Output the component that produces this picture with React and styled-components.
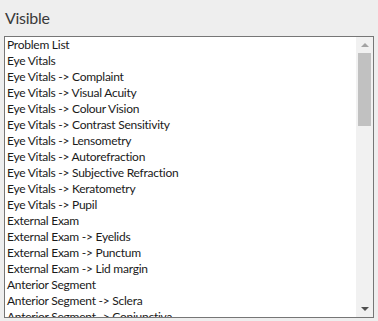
import styled, { createGlobalStyle } from 'styled-components';

const GlobalStyle = createGlobalStyle`
   html, body {
      margin: 0;
      padding: 0;
      background: #eeeeee;
   }
   body {
      font-family: 'Lato', 'Liberation Sans', sans-serif;
   }
`;

const Panel = styled.div`
   display: flex;
   flex-direction: column;
   padding: 5px 4px 0 4px;
   height: 321px;
   box-sizing: border-box;
`;

const Label = styled.label`
   font-size: 16px;
   letter-spacing: -0.3px;
   color: #3a3a3a;
   padding-left: 1px;
   height: 31px;
   line-height: 25px;
`;

const ListFrame = styled.div`
   display: flex;
   width: 370px;
   height: 282px;
   box-sizing: border-box;
   border: 1px solid #767676;
   background: #fff;
`;

const ListBox = styled.select`
   flex: 1;
   min-width: 0;
   height: 100%;
   margin: 0;
   padding: 0;
   border: none;
   background: #fff;
   color: #1a1a1a;
   font-family: 'Lato', 'Liberation Sans', sans-serif;
   font-size: 12px;
   letter-spacing: -0.25px;
   outline: none;
   overflow: hidden;

   option {
      padding: 0 2px 1px;
      height: 15px;
      line-height: 15px;
   }
`;

// hand-drawn scrollbar, the native one is hidden in the capture
const ScrollTrack = styled.div`
   display: flex;
   flex-direction: column;
   width: 17px;
   flex-shrink: 0;
   background: #f1f1f1;
`;

const ScrollButton = styled.div`
   display: flex;
   align-items: center;
   justify-content: center;
   height: 16px;
   flex-shrink: 0;
`;

const Arrow = styled.span`
   width: 0;
   height: 0;
   border-left: 4px solid transparent;
   border-right: 4px solid transparent;
   ${({ $down, $color }) =>
      $down
         ? `border-top: 4px solid ${$color};`
         : `border-bottom: 4px solid ${$color};`}
`;

const Thumb = styled.div`
   height: 73px;
   margin: 0 2px;
   background: #c1c1c1;
   flex-shrink: 0;
`;

const Spacer = styled.div`
   flex: 1;
`;

const items = [
   'Problem List',
   'Eye Vitals',
   'Eye Vitals -> Complaint',
   'Eye Vitals -> Visual Acuity',
   'Eye Vitals -> Colour Vision',
   'Eye Vitals -> Contrast Sensitivity',
   'Eye Vitals -> Lensometry',
   'Eye Vitals -> Autorefraction',
   'Eye Vitals -> Subjective Refraction',
   'Eye Vitals -> Keratometry',
   'Eye Vitals -> Pupil',
   'External Exam',
   'External Exam -> Eyelids',
   'External Exam -> Punctum',
   'External Exam -> Lid margin',
   'Anterior Segment',
   'Anterior Segment -> Sclera',
   'Anterior Segment -> Conjunctiva',
   'Anterior Segment -> Cornea',
   'Anterior Segment -> Anterior Chamber',
   'Anterior Segment -> Iris',
   'Anterior Segment -> Lens',
   'Posterior Segment',
   'Posterior Segment -> Vitreous',
   'Posterior Segment -> Optic Disc',
   'Posterior Segment -> Macula',
   'Posterior Segment -> Retina',
   'Investigations',
   'Diagnosis',
   'Plan',
];

export default function App() {
   return (
      <>
         <GlobalStyle />
         <Panel>
            <Label htmlFor="visible">Visible</Label>
            <ListFrame>
               <ListBox id="visible" multiple>
                  {items.map((item) => (
                     <option key={item} value={item}>
                        {item}
                     </option>
                  ))}
               </ListBox>
               <ScrollTrack>
                  <ScrollButton>
                     <Arrow $color="#a3a3a3" />
                  </ScrollButton>
                  <Thumb />
                  <Spacer />
                  <ScrollButton>
                     <Arrow $down $color="#505050" />
                  </ScrollButton>
               </ScrollTrack>
            </ListFrame>
         </Panel>
      </>
   );
}
